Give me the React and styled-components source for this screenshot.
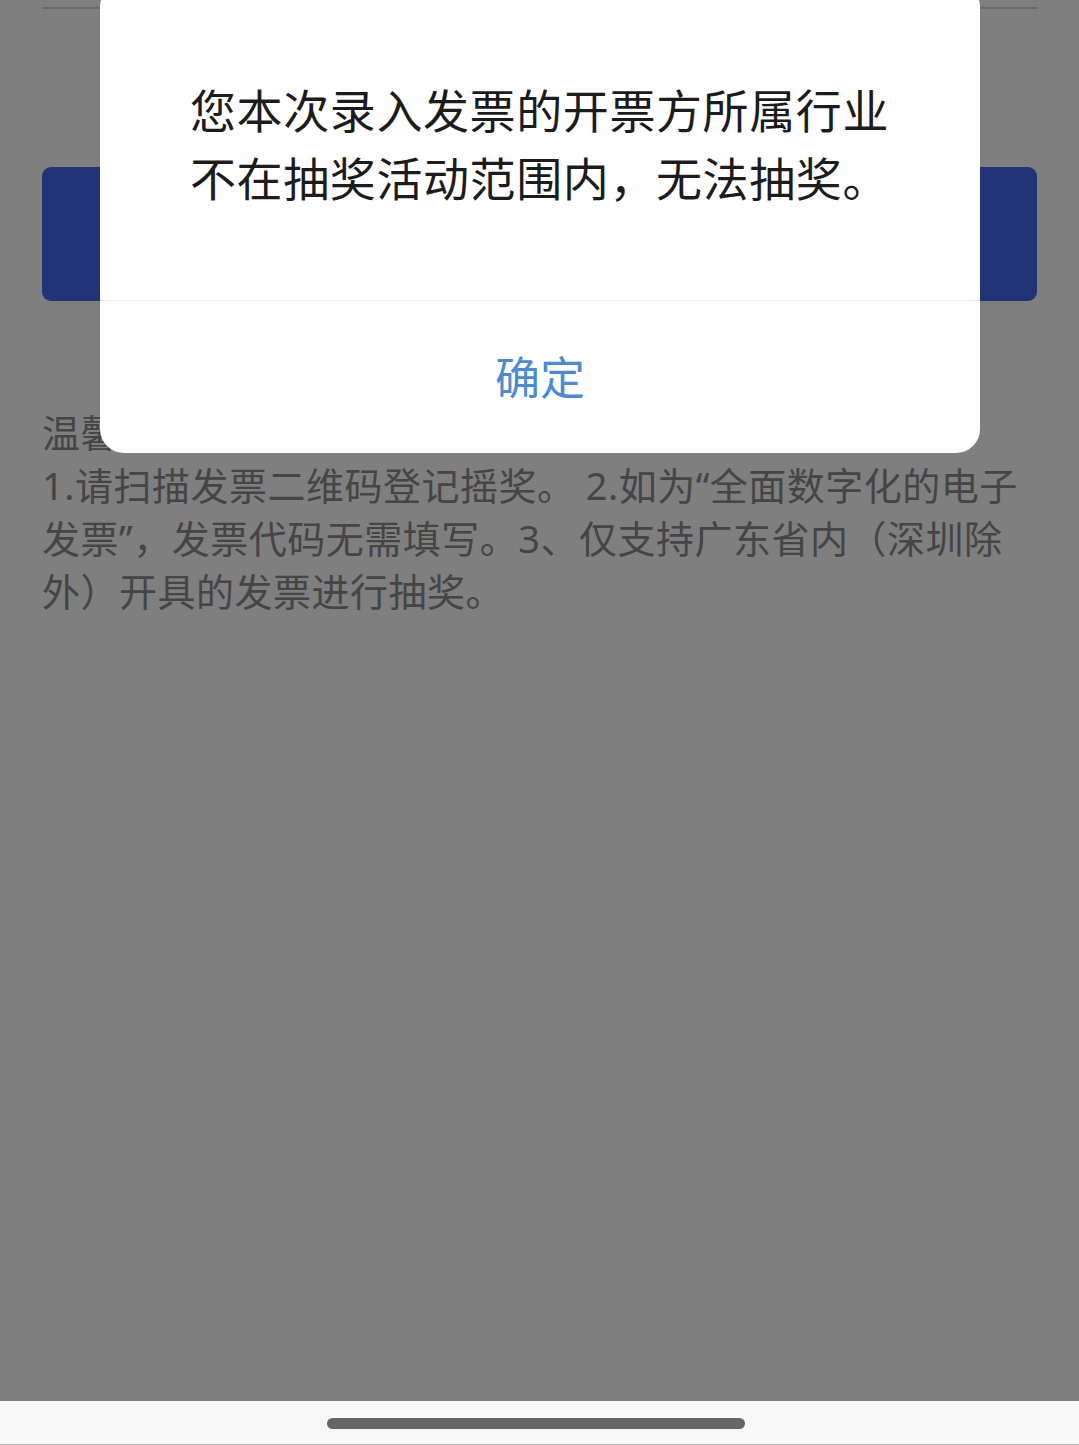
import React from "react";
import styled, { createGlobalStyle } from "styled-components";

const GlobalStyle = createGlobalStyle`
  html, body {
    margin: 0;
    padding: 0;
    background: #ffffff;
  }
  body {
    font-family: "Noto Sans CJK SC", "Noto Sans", sans-serif;
  }
  #root {
    width: 1079px;
    height: 1445px;
    overflow: hidden;
  }
`;

const Screen = styled.div`
  position: relative;
  width: 1079px;
  height: 1445px;
  display: flex;
  flex-direction: column;
  overflow: hidden;
  background: #ffffff;
`;

const Page = styled.main`
  flex: 1;
  display: flex;
  flex-direction: column;
  padding: 7px 42px 0 42px;
`;

const Divider = styled.div`
  height: 2px;
  margin-right: -1px;
  background: #d6d6d6;
`;

const SubmitButton = styled.button`
  margin-top: 158px;
  height: 134px;
  width: 995px;
  border: none;
  border-radius: 9px;
  background: #4169ef;
`;

const Tips = styled.section`
  margin-top: 105px;
  display: flex;
  flex-direction: column;
  color: #8a8a8a;
  font-family: "Noto Sans", "Noto Sans CJK SC", sans-serif;
  font-size: 38px;
  line-height: 53px;
  letter-spacing: 0.5px;
`;

const TipLine = styled.div`
  white-space: nowrap;
`;

const Overlay = styled.div`
  position: absolute;
  inset: 0;
  background: rgba(0, 0, 0, 0.5);
`;

const Dialog = styled.div`
  position: absolute;
  top: -17px;
  left: 100px;
  width: 880px;
  background: #ffffff;
  border-radius: 24px;
  display: flex;
  flex-direction: column;
  overflow: hidden;
`;

const Message = styled.div`
  padding: 91px 88px 90px 90px;
  color: #1c1c1c;
  font-size: 46px;
  line-height: 68px;
  letter-spacing: 0.6px;
  border-bottom: 1.5px solid #e8e8e8;
`;

const MessageLine = styled.div`
  white-space: nowrap;
`;

const ConfirmButton = styled.button`
  height: 152px;
  border: none;
  background: transparent;
  color: #4a8bd9;
  font-family: "Noto Sans CJK SC", "Noto Sans", sans-serif;
  font-size: 45px;
  padding: 0 0 4px 0;
  display: flex;
  align-items: center;
  justify-content: center;
`;

const NavBar = styled.div`
  position: relative;
  z-index: 2;
  height: 44px;
  background: #f8f8f8;
  border-bottom: 1px solid #b8b8b8;
  display: flex;
  justify-content: center;
  align-items: flex-start;
  padding-top: 17px;
  box-sizing: border-box;
`;

const Handle = styled.div`
  width: 418px;
  height: 11px;
  margin-right: 8px;
  border-radius: 6px;
  background: #666666;
`;

export default function App() {
  return (
    <>
      <GlobalStyle />
      <Screen>
        <Page>
          <Divider />
          <SubmitButton aria-label="提交" />
          <Tips>
            <TipLine>温馨提示：</TipLine>
            <TipLine>1.请扫描发票二维码登记摇奖。 2.如为“全面数字化的电子</TipLine>
            <TipLine>发票”，发票代码无需填写。3、仅支持广东省内（深圳除</TipLine>
            <TipLine>外）开具的发票进行抽奖。</TipLine>
          </Tips>
        </Page>
        <Overlay />
        <Dialog>
          <Message>
            <MessageLine>您本次录入发票的开票方所属行业</MessageLine>
            <MessageLine>不在抽奖活动范围内，无法抽奖。</MessageLine>
          </Message>
          <ConfirmButton>确定</ConfirmButton>
        </Dialog>
        <NavBar>
          <Handle />
        </NavBar>
      </Screen>
    </>
  );
}
